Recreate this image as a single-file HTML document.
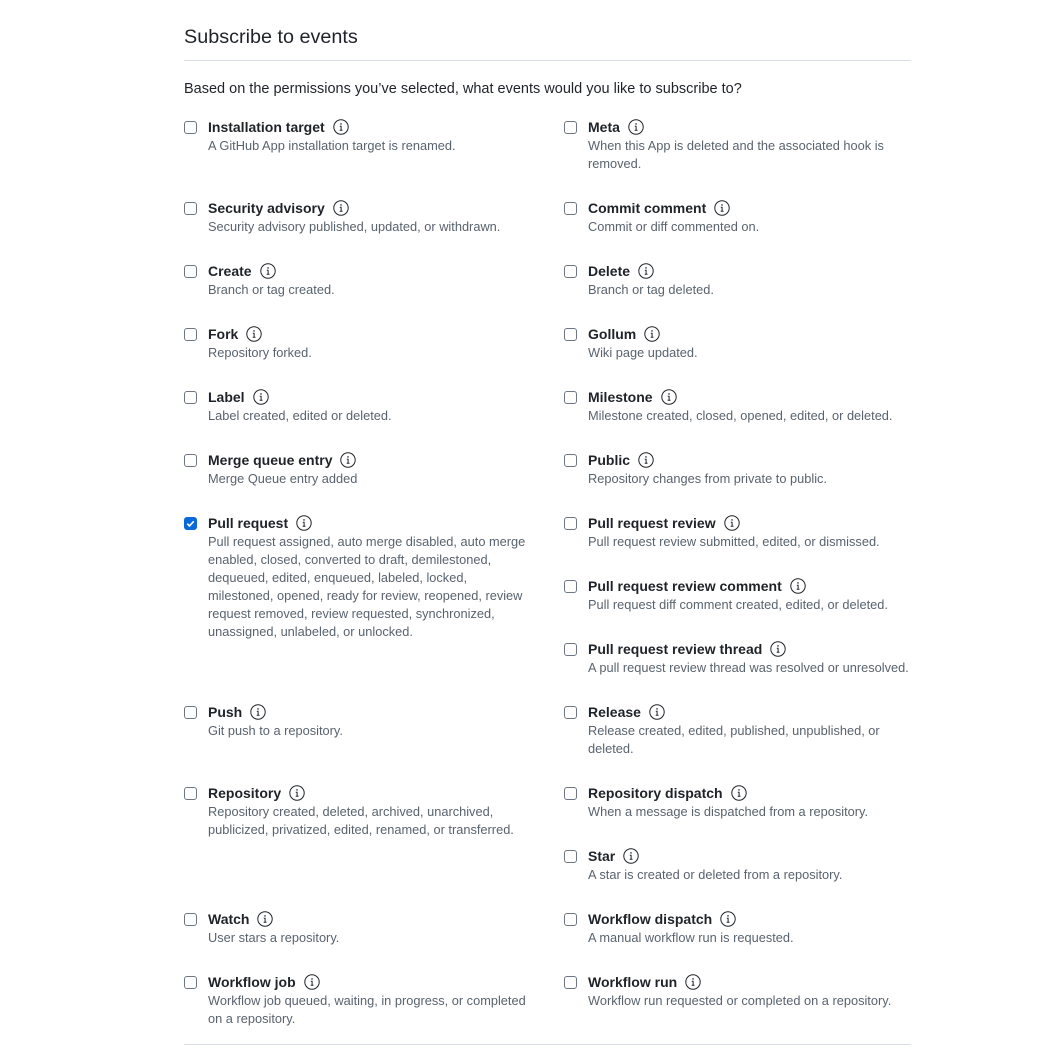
<!DOCTYPE html>
<html><head><meta charset="utf-8">
<style>
*{margin:0;padding:0;box-sizing:border-box}
body{width:1046px;height:1054px;background:#fff;font-family:"Liberation Sans",Arial,sans-serif;color:#1f2328;position:relative;overflow:hidden}
h2{position:absolute;left:184px;top:25px;font-size:19.8px;font-weight:400;line-height:24px}
.hr{position:absolute;left:184px;width:727px;height:1px;background:#d8dee4}
.intro{position:absolute;left:184px;top:80px;font-size:14.5px;line-height:18px}
.it{position:absolute;width:340px}
.cb{position:absolute;left:0;top:3px;width:13px;height:13px;border:1px solid #6e7781;border-radius:3px;background:#fff}
.cb.on{background:#0969da;border-color:#0969da}
.t{position:absolute;left:24px;top:0;font-size:14px;font-weight:700;line-height:18px;white-space:nowrap;display:flex;align-items:center}
.t svg{margin-left:8px}
.d{position:absolute;left:24px;top:19px;font-size:12.8px;line-height:18px;color:#59636e;width:326px}
</style></head><body>
<h2>Subscribe to events</h2>
<div class="hr" style="top:60px"></div>
<div class="intro">Based on the permissions you’ve selected, what events would you like to subscribe to?</div>
<div class="hr" style="top:1044px"></div>

<svg width="0" height="0" style="position:absolute"><defs><symbol id="i" viewBox="0 0 16 16"><circle cx="8" cy="8" r="7.2" fill="none" stroke="#1f2328" stroke-width="1"/><circle cx="8" cy="4.9" r="0.8" fill="#1f2328"/><path d="M6.8 7.3h1.3v4M6.7 11.3h2.8" fill="none" stroke="#1f2328" stroke-width="1"/></symbol></defs></svg>

<div class="it" style="left:184px;top:118px"><div class="cb"></div><div class="t">Installation target<svg width="16" height="16"><use href="#i"/></svg></div><div class="d">A GitHub App installation target is renamed.</div></div>
<div class="it" style="left:564px;top:118px"><div class="cb"></div><div class="t">Meta<svg width="16" height="16"><use href="#i"/></svg></div><div class="d" style="width:310px">When this App is deleted and the associated hook is removed.</div></div>

<div class="it" style="left:184px;top:199px"><div class="cb"></div><div class="t">Security advisory<svg width="16" height="16"><use href="#i"/></svg></div><div class="d">Security advisory published, updated, or withdrawn.</div></div>
<div class="it" style="left:564px;top:199px"><div class="cb"></div><div class="t">Commit comment<svg width="16" height="16"><use href="#i"/></svg></div><div class="d">Commit or diff commented on.</div></div>

<div class="it" style="left:184px;top:262px"><div class="cb"></div><div class="t">Create<svg width="16" height="16"><use href="#i"/></svg></div><div class="d">Branch or tag created.</div></div>
<div class="it" style="left:564px;top:262px"><div class="cb"></div><div class="t">Delete<svg width="16" height="16"><use href="#i"/></svg></div><div class="d">Branch or tag deleted.</div></div>

<div class="it" style="left:184px;top:325px"><div class="cb"></div><div class="t">Fork<svg width="16" height="16"><use href="#i"/></svg></div><div class="d">Repository forked.</div></div>
<div class="it" style="left:564px;top:325px"><div class="cb"></div><div class="t">Gollum<svg width="16" height="16"><use href="#i"/></svg></div><div class="d">Wiki page updated.</div></div>

<div class="it" style="left:184px;top:388px"><div class="cb"></div><div class="t">Label<svg width="16" height="16"><use href="#i"/></svg></div><div class="d">Label created, edited or deleted.</div></div>
<div class="it" style="left:564px;top:388px;width:380px"><div class="cb"></div><div class="t">Milestone<svg width="16" height="16"><use href="#i"/></svg></div><div class="d" style="width:356px">Milestone created, closed, opened, edited, or deleted.</div></div>

<div class="it" style="left:184px;top:451px"><div class="cb"></div><div class="t">Merge queue entry<svg width="16" height="16"><use href="#i"/></svg></div><div class="d">Merge Queue entry added</div></div>
<div class="it" style="left:564px;top:451px"><div class="cb"></div><div class="t">Public<svg width="16" height="16"><use href="#i"/></svg></div><div class="d">Repository changes from private to public.</div></div>

<div class="it" style="left:184px;top:514px"><div class="cb on"><svg width="11" height="11" viewBox="0 0 12 12" style="position:absolute;left:0;top:0"><path d="M2.5 6.2l2.4 2.4 4.6-5" fill="none" stroke="#fff" stroke-width="1.8"/></svg></div><div class="t">Pull request<svg width="16" height="16"><use href="#i"/></svg></div><div class="d">Pull request assigned, auto merge disabled, auto merge enabled, closed, converted to draft, demilestoned, dequeued, edited, enqueued, labeled, locked, milestoned, opened, ready for review, reopened, review request removed, review requested, synchronized, unassigned, unlabeled, or unlocked.</div></div>
<div class="it" style="left:564px;top:514px"><div class="cb"></div><div class="t">Pull request review<svg width="16" height="16"><use href="#i"/></svg></div><div class="d">Pull request review submitted, edited, or dismissed.</div></div>
<div class="it" style="left:564px;top:577px"><div class="cb"></div><div class="t">Pull request review comment<svg width="16" height="16"><use href="#i"/></svg></div><div class="d">Pull request diff comment created, edited, or deleted.</div></div>
<div class="it" style="left:564px;top:640px;width:380px"><div class="cb"></div><div class="t">Pull request review thread<svg width="16" height="16"><use href="#i"/></svg></div><div class="d" style="width:356px">A pull request review thread was resolved or unresolved.</div></div>

<div class="it" style="left:184px;top:703px"><div class="cb"></div><div class="t">Push<svg width="16" height="16"><use href="#i"/></svg></div><div class="d">Git push to a repository.</div></div>
<div class="it" style="left:564px;top:703px"><div class="cb"></div><div class="t">Release<svg width="16" height="16"><use href="#i"/></svg></div><div class="d" style="width:310px">Release created, edited, published, unpublished, or deleted.</div></div>

<div class="it" style="left:184px;top:784px"><div class="cb"></div><div class="t">Repository<svg width="16" height="16"><use href="#i"/></svg></div><div class="d">Repository created, deleted, archived, unarchived, publicized, privatized, edited, renamed, or transferred.</div></div>
<div class="it" style="left:564px;top:784px"><div class="cb"></div><div class="t">Repository dispatch<svg width="16" height="16"><use href="#i"/></svg></div><div class="d">When a message is dispatched from a repository.</div></div>
<div class="it" style="left:564px;top:847px"><div class="cb"></div><div class="t">Star<svg width="16" height="16"><use href="#i"/></svg></div><div class="d">A star is created or deleted from a repository.</div></div>

<div class="it" style="left:184px;top:910px"><div class="cb"></div><div class="t">Watch<svg width="16" height="16"><use href="#i"/></svg></div><div class="d">User stars a repository.</div></div>
<div class="it" style="left:564px;top:910px"><div class="cb"></div><div class="t">Workflow dispatch<svg width="16" height="16"><use href="#i"/></svg></div><div class="d">A manual workflow run is requested.</div></div>

<div class="it" style="left:184px;top:973px"><div class="cb"></div><div class="t">Workflow job<svg width="16" height="16"><use href="#i"/></svg></div><div class="d">Workflow job queued, waiting, in progress, or completed on a repository.</div></div>
<div class="it" style="left:564px;top:973px;width:380px"><div class="cb"></div><div class="t">Workflow run<svg width="16" height="16"><use href="#i"/></svg></div><div class="d" style="width:356px">Workflow run requested or completed on a repository.</div></div>
</body></html>
